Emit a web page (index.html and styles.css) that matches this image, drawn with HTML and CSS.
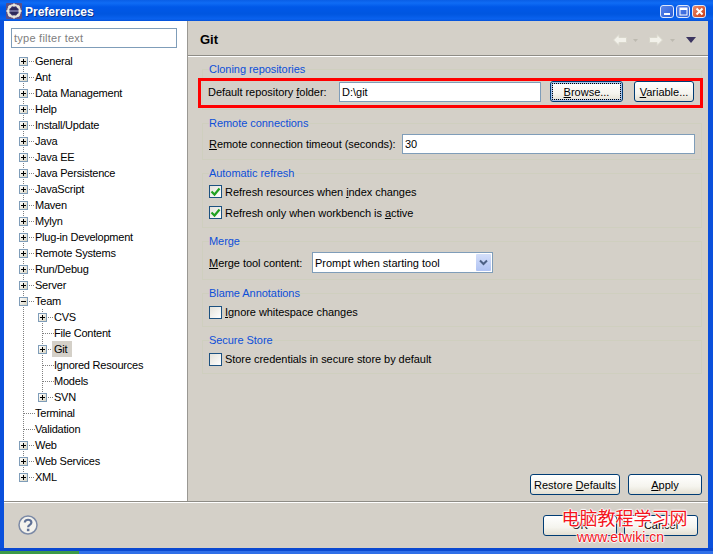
FILE: index.html
```html
<!DOCTYPE html>
<html lang="en">
<head>
<meta charset="utf-8">
<title>Preferences</title>
<link rel="stylesheet" href="styles.css">
</head>
<body>
<div class="window">
  <header class="titlebar">
    <svg class="app-icon" viewBox="0 0 16 16" width="16" height="16">
      <rect x="0" y="0" width="16" height="16" rx="1" fill="#5a4f86"/>
      <circle cx="8" cy="8" r="6" fill="none" stroke="#e8e6da" stroke-width="2"/>
      <path d="M8 0.5v3M8 12.5v3M0.5 8h3M12.5 8h3M2.7 2.7l2 2M11.3 11.3l2 2M2.7 13.3l2-2M11.3 4.700l2-2" stroke="#e8e6da" stroke-width="2"/>
      <circle cx="8" cy="8" r="4" fill="#2d2a5a"/>
      <rect x="4" y="7" width="8" height="2" fill="#6b6a9a"/>
    </svg>
    <span class="title-text">Preferences</span>
    <div class="win-controls">
      <span class="win-btn win-min"><svg viewBox="0 0 13 13" width="13" height="13"><rect x="3" y="8" width="6" height="2" fill="#fff"/></svg></span>
      <span class="win-btn win-max"><svg viewBox="0 0 13 13" width="13" height="13"><rect x="3" y="3" width="7" height="7" fill="none" stroke="#fff" stroke-width="1"/><rect x="3" y="3" width="7" height="2" fill="#fff"/></svg></span>
      <span class="win-btn win-close"><svg viewBox="0 0 13 13" width="13" height="13"><path d="M3.500 3.500l6 6M9.500 3.500l-6 6" stroke="#fff" stroke-width="2"/></svg></span>
    </div>
  </header>

  <div class="client">
    <div class="main">
      <aside class="nav">
        <input class="filter" type="text" placeholder="type filter text">
        <ul class="tree">
          <li><div class="row"><span class="twisty"></span><span class="stub"></span><span class="label">General</span></div></li>
          <li><div class="row"><span class="twisty"></span><span class="stub"></span><span class="label">Ant</span></div></li>
          <li><div class="row"><span class="twisty"></span><span class="stub"></span><span class="label">Data Management</span></div></li>
          <li><div class="row"><span class="twisty"></span><span class="stub"></span><span class="label">Help</span></div></li>
          <li><div class="row"><span class="twisty"></span><span class="stub"></span><span class="label">Install/Update</span></div></li>
          <li><div class="row"><span class="twisty"></span><span class="stub"></span><span class="label">Java</span></div></li>
          <li><div class="row"><span class="twisty"></span><span class="stub"></span><span class="label">Java EE</span></div></li>
          <li><div class="row"><span class="twisty"></span><span class="stub"></span><span class="label">Java Persistence</span></div></li>
          <li><div class="row"><span class="twisty"></span><span class="stub"></span><span class="label">JavaScript</span></div></li>
          <li><div class="row"><span class="twisty"></span><span class="stub"></span><span class="label">Maven</span></div></li>
          <li><div class="row"><span class="twisty"></span><span class="stub"></span><span class="label">Mylyn</span></div></li>
          <li><div class="row"><span class="twisty"></span><span class="stub"></span><span class="label">Plug-in Development</span></div></li>
          <li><div class="row"><span class="twisty"></span><span class="stub"></span><span class="label">Remote Systems</span></div></li>
          <li><div class="row"><span class="twisty"></span><span class="stub"></span><span class="label">Run/Debug</span></div></li>
          <li><div class="row"><span class="twisty"></span><span class="stub"></span><span class="label">Server</span></div></li>
          <li>
            <div class="row"><span class="twisty open"></span><span class="stub"></span><span class="label">Team</span></div>
            <ul class="subtree">
              <li><div class="row"><span class="twisty"></span><span class="stub"></span><span class="label">CVS</span></div></li>
              <li><div class="row"><span class="stub leaf"></span><span class="label">File Content</span></div></li>
              <li><div class="row"><span class="twisty"></span><span class="stub"></span><span class="label selected">Git</span></div></li>
              <li><div class="row"><span class="stub leaf"></span><span class="label">Ignored Resources</span></div></li>
              <li><div class="row"><span class="stub leaf"></span><span class="label">Models</span></div></li>
              <li><div class="row"><span class="twisty"></span><span class="stub"></span><span class="label">SVN</span></div></li>
            </ul>
          </li>
          <li><div class="row"><span class="stub leaf"></span><span class="label">Terminal</span></div></li>
          <li><div class="row"><span class="stub leaf"></span><span class="label">Validation</span></div></li>
          <li><div class="row"><span class="twisty"></span><span class="stub"></span><span class="label">Web</span></div></li>
          <li><div class="row"><span class="twisty"></span><span class="stub"></span><span class="label">Web Services</span></div></li>
          <li><div class="row"><span class="twisty"></span><span class="stub"></span><span class="label">XML</span></div></li>
        </ul>
      </aside>

      <section class="page">
        <div class="page-head">
          <h1 class="page-title">Git</h1>
          <div class="page-tools">
            <svg class="tool-arrow" viewBox="0 0 14 12" width="14" height="12"><path d="M0.500 6L6 0.500V3.500H13.500V8.500H6V11.500Z" fill="#f2f1ea" stroke="#d9d7cc"/></svg>
            <svg class="tool-drop" viewBox="0 0 5 3" width="5" height="3"><path d="M0 0H5L2.500 3Z" fill="#bdbab0"/></svg>
            <svg class="tool-arrow gap-a" viewBox="0 0 14 12" width="14" height="12"><path d="M13.500 6L8 0.500V3.500H0.500V8.500H8V11.500Z" fill="#f2f1ea" stroke="#d9d7cc"/></svg>
            <svg class="tool-drop gap-b" viewBox="0 0 5 3" width="5" height="3"><path d="M0 0H5L2.500 3Z" fill="#bdbab0"/></svg>
            <svg class="tool-menu" viewBox="0 0 10 6" width="10" height="6"><path d="M0 0H10L5 6Z" fill="#3c3560"/></svg>
          </div>
        </div>

        <div class="groups">
          <fieldset class="group group-clone">
            <legend>Cloning repositories</legend>
            <div class="field-row clone-row">
              <label class="field-label">Default repository <u>f</u>older:</label>
              <input class="text-input repo-input" type="text" value="D:\git">
              <button class="btn focused browse-btn" type="button"><u>B</u>rowse...</button>
              <button class="btn variable-btn" type="button"><u>V</u>ariable...</button>
              <span class="highlight"></span>
            </div>
          </fieldset>

          <fieldset class="group group-remote">
            <legend>Remote connections</legend>
            <div class="field-row">
              <label class="field-label timeout-label"><u>R</u>emote connection timeout (seconds):</label>
              <input class="text-input timeout-input" type="text" value="30">
            </div>
          </fieldset>

          <fieldset class="group group-auto">
            <legend>Automatic refresh</legend>
            <div class="check-row"><span class="check"><svg viewBox="0 0 11 11" width="11" height="11"><path d="M1.500 5.500L4.500 8.500L9.500 2.500" fill="none" stroke="#21a121" stroke-width="2.200"/></svg></span><span>Refresh resources when <u>i</u>ndex changes</span></div>
            <div class="check-row"><span class="check"><svg viewBox="0 0 11 11" width="11" height="11"><path d="M1.500 5.500L4.500 8.500L9.500 2.500" fill="none" stroke="#21a121" stroke-width="2.200"/></svg></span><span>Refresh only when workbench is <u>a</u>ctive</span></div>
          </fieldset>

          <fieldset class="group group-merge">
            <legend>Merge</legend>
            <div class="field-row">
              <label class="field-label merge-label"><u>M</u>erge tool content:</label>
              <div class="combo">
                <span class="combo-text">Prompt when starting tool</span>
                <span class="combo-btn"><svg viewBox="0 0 9 7" width="9" height="7"><path d="M1 1.500L4.500 5L8 1.500" fill="none" stroke="#4d6185" stroke-width="2"/></svg></span>
              </div>
            </div>
          </fieldset>

          <fieldset class="group group-single">
            <legend>Blame Annotations</legend>
            <div class="check-row"><span class="check"></span><span><u>I</u>gnore whitespace changes</span></div>
          </fieldset>

          <fieldset class="group group-single">
            <legend>Secure Store</legend>
            <div class="check-row"><span class="check"></span><span>Store credentials in secure store by default</span></div>
          </fieldset>
        </div>

        <div class="page-actions">
          <button class="btn restore-btn" type="button">Restore <u>D</u>efaults</button>
          <button class="btn apply-btn" type="button"><u>A</u>pply</button>
        </div>
      </section>
    </div>

    <footer class="footer">
      <svg class="help" viewBox="0 0 20 20" width="20" height="20">
        <circle cx="10" cy="10" r="9" fill="#f4f3ee" stroke="#7c8aa6" stroke-width="1.500"/>
        <path d="M6.800 7.500C6.800 3.800 13.400 3.800 13.400 7.500C13.400 10 10.100 9.800 10.100 12.300" fill="none" stroke="#5f7196" stroke-width="2.200"/>
        <rect x="8.900" y="13.700" width="2.500" height="2.500" fill="#5f7196"/>
      </svg>
      <div class="footer-actions">
        <button class="btn ok-btn" type="button">OK</button>
        <button class="btn cancel-btn" type="button">Cancel</button>
      </div>
    </footer>
  </div>

  <div class="taskbar"><span class="start"></span></div>

  <div class="watermark">
    <div class="wm-cn">电脑教程学习网</div>
    <div class="wm-en">www.etwiki.cn</div>
  </div>
</div>
</body>
</html>
```

FILE: styles.css
```css
* { box-sizing: border-box; }
html, body { margin: 0; padding: 0; }
body { width: 713px; height: 554px; overflow: hidden; font: 11px/14px "Liberation Sans", sans-serif; letter-spacing: -0.05px; color: #000; }

.window {
  position: relative;
  width: 713px;
  height: 554px;
  display: flex;
  flex-direction: column;
  background: #0a50dc;
  overflow: hidden;
}

.titlebar {
  height: 21px;
  flex: none;
  display: flex;
  align-items: center;
  padding: 0 7px 0 6px;
  background: linear-gradient(#0a5ee6 0, #0f6cf5 3px, #0058e8 7px, #0056e0 14px, #0a62ee 19px, #0450d8 21px);
}
.app-icon { flex: none; margin-right: 3px; }
.title-text {
  font: bold 12px/14px "Liberation Sans", sans-serif;
  letter-spacing: 0;
  color: #fff;
  text-shadow: 1px 1px 0 #0a2f8a;
  padding-top: 2px;
}
.win-controls { margin-left: auto; display: flex; gap: 2px; margin-top: 1px; }
.win-btn {
  width: 14px;
  height: 13px;
  border: 1px solid #dfe8fa;
  border-radius: 3px;
  display: flex;
  align-items: center;
  justify-content: center;
  background: linear-gradient(135deg, #5a86ea, #2b5ed8);
}
.win-btn svg { flex: none; }
.win-close { background: linear-gradient(135deg, #ea8a6c, #c83a14); }

.client {
  flex: 1;
  min-height: 0;
  margin: 0 5px 0 4px;
  display: flex;
  flex-direction: column;
  background: #d4d0c8;
}
.main { flex: 1; min-height: 0; display: flex; }

.nav {
  width: 183px;
  flex: none;
  background: #fff;
  padding: 7px 0 0 7px;
}
.filter {
  display: block;
  width: 166px;
  height: 20px;
  border: 1px solid #7f9db9;
  padding: 0 2px;
  font: inherit;
  letter-spacing: 0.25px;
  outline: none;
  background: #fff;
}
.filter::placeholder { color: #808080; opacity: 1; }

.tree, .subtree { list-style: none; margin: 0; padding: 0; }
.tree { margin: 5px 0 0 8px; letter-spacing: -0.22px; }
.tree > li {
  background: repeating-linear-gradient(#808080 0 1px, transparent 1px 2px) 4px 0 / 1px 100% no-repeat;
}
.tree > li:first-child { background-position: 4px 8px; }
.tree > li:last-child { background-size: 1px 8px; }
.subtree { padding-left: 19px; }
.subtree > li { background: repeating-linear-gradient(#808080 0 1px, transparent 1px 2px) 4px 0 / 1px 100% no-repeat; }
.subtree > li:last-child { background-size: 1px 8px; }
.row { display: flex; align-items: center; height: 16px; white-space: nowrap; }
.twisty {
  position: relative;
  flex: none;
  width: 9px;
  height: 9px;
  border: 1px solid #7f9db9;
  background: linear-gradient(135deg, #fff, #d8d4c2);
}
.twisty::before {
  content: "";
  position: absolute;
  left: 1px; top: 3px;
  width: 5px; height: 1px;
  background: #000;
}
.twisty::after {
  content: "";
  position: absolute;
  left: 3px; top: 1px;
  width: 1px; height: 5px;
  background: #000;
}
.twisty.open::after { display: none; }
.stub {
  flex: none;
  width: 6px;
  height: 1px;
  margin: 0 0 0 1px;
  background: repeating-linear-gradient(90deg, #808080 0 1px, transparent 1px 2px);
}
.stub.leaf { width: 11px; margin-left: 5px; }
.label { padding: 0 6px 0 0; }
.selected { background: #d4d0c8; margin-left: -2px; padding: 1px 5px 1px 2px; }

.page {
  flex: 1;
  min-width: 0;
  display: flex;
  flex-direction: column;
  border-left: 1px solid #9a9893;
  box-shadow: inset 1px 0 0 #d4d0c8;
}
.page-head {
  height: 35px;
  flex: none;
  display: flex;
  align-items: center;
  padding: 4px 12px 0 12px;
  border-bottom: 1px solid #8e8c86;
  box-shadow: 0 1px 0 #fff;
}
.page-title { margin: 0; font: bold 13px/16px "Liberation Sans", sans-serif; letter-spacing: 0; }
.page-tools { margin-left: auto; display: flex; align-items: center; }
.tool-drop { margin-left: 6px; }
.gap-a { margin-left: 11px; }
.gap-b { margin-left: 7px; }
.tool-menu { margin-left: 11px; margin-top: -1px; }

.groups { padding: 6px 6px 0 14px; }
.group {
  margin: 0 0 6px;
  padding: 0 6px 5px;
  border: 1px solid #cfcfbf;
  min-width: 0;
}
.group legend {
  padding: 0;
  height: 14px;
  line-height: 14px;
  color: #0d4fd8;
}
.group-clone { padding-bottom: 7px; }
.group-auto { padding-bottom: 4px; }
.group-merge { padding-bottom: 6px; }
.group-single { padding-bottom: 4px; }
.field-row { display: flex; align-items: center; padding-top: 4px; }
.clone-row { position: relative; padding-top: 5px; }
.field-label { white-space: nowrap; flex: none; }
.clone-row .field-label { width: 131px; margin-left: -1px; }
.timeout-label { width: 193px; }
.merge-label { width: 103px; }
.text-input {
  display: block;
  height: 20px;
  border: 1px solid #7f9db9;
  padding: 0 2px;
  font: inherit;
  background: #fff;
  outline: none;
}
.repo-input { width: 202px; }
.timeout-input { width: 293px; }
.btn {
  display: block;
  height: 21px;
  padding: 0;
  border: 1px solid #003c74;
  border-radius: 3px;
  font: inherit;
  color: #000;
  background: linear-gradient(#fff 0, #f5f4ee 60%, #e3dfd2 100%);
  text-align: center;
}
.browse-btn { width: 73px; margin-left: 9px; }
.focused { box-shadow: inset 0 0 0 2px #a9c4ec; outline: 1px dotted #000; outline-offset: -3px; }
.variable-btn { width: 60px; margin-left: 11px; }
.highlight {
  position: absolute;
  left: -11px;
  right: -8px;
  top: 2px;
  height: 30px;
  border: 3px solid #f00;
  pointer-events: none;
}

.check-row { display: flex; align-items: center; height: 21px; white-space: nowrap; }
.group-auto .check-row:first-of-type { margin-top: 1px; }
.group-single .check-row { margin-top: 2px; height: 20px; }
.check {
  flex: none;
  width: 13px;
  height: 13px;
  margin-right: 3px;
  border: 1px solid #1c5180;
  background: linear-gradient(135deg, #e4e2da, #fff);
  display: flex;
  align-items: center;
  justify-content: center;
}
.check svg { display: block; flex: none; }

.combo {
  width: 181px;
  height: 21px;
  border: 1px solid #7f9db9;
  background: #fff;
  display: flex;
  align-items: center;
  padding: 1px 1px 1px 2px;
  letter-spacing: 0;
}
.combo-text { flex: 1; }
.combo-btn {
  width: 15px;
  height: 17px;
  flex: none;
  border-radius: 1px;
  background: linear-gradient(#d4dffa, #b0c3f3);
  display: flex;
  align-items: center;
  justify-content: center;
}

.page-actions {
  margin-top: auto;
  display: flex;
  justify-content: flex-end;
  gap: 8px;
  padding: 0 6px 6px 0;
}
.restore-btn { width: 90px; }
.apply-btn { width: 74px; }

.footer {
  height: 47px;
  flex: none;
  display: flex;
  align-items: center;
  padding: 0 10px 0 14px;
  border-top: 1px solid #8e8c86;
  box-shadow: inset 0 1px 0 #fff;
}
.help { flex: none; }
.footer-actions { margin-left: auto; display: flex; gap: 7px; }
.ok-btn, .cancel-btn { width: 74px; }

.taskbar {
  flex: none;
  height: 6px;
  border-top: 3px solid #0a48d0;
  background: #2f6fe8;
}
.start { display: block; width: 79px; height: 3px; background: #3c9a48; }

.watermark {
  position: absolute;
  left: 561px;
  top: 505px;
  width: 127px;
  text-align: center;
  color: #f4141c;
  letter-spacing: 0;
  text-shadow: 1px 0 1px #fff, -1px 0 1px #fff, 0 1px 1px #fff, 0 -1px 1px #fff;
  white-space: nowrap;
}
.wm-cn { font: 18px/24px "Noto Sans CJK SC", sans-serif; }
.wm-en { font: 14px/16px "Liberation Sans", sans-serif; padding-right: 8px; }
```
